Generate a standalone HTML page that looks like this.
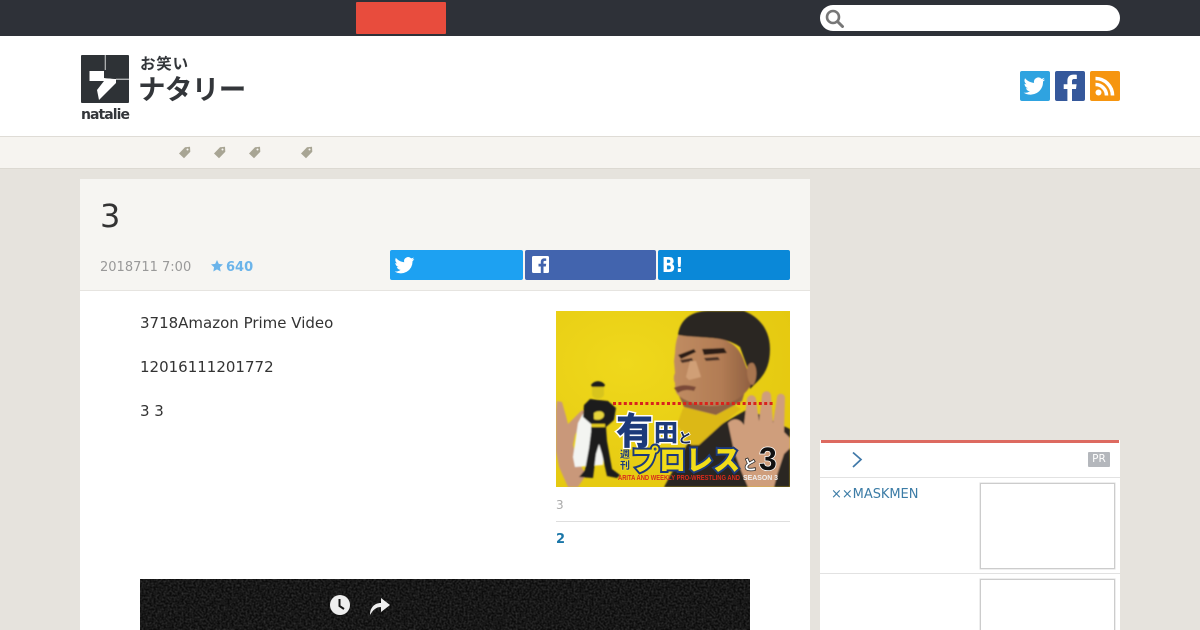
<!DOCTYPE html>
<html lang="ja"><head><meta charset="utf-8"><title>3</title>
<style>
html,body{margin:0;padding:0;width:1200px;height:630px;overflow:hidden;background:#e6e3dd;font-family:"DejaVu Sans","Noto Sans CJK JP",sans-serif;color:#333}
#w{position:relative;width:1200px;height:630px;overflow:hidden}
.a{position:absolute}
svg{display:block}
</style></head><body><div id="w">
<div class="a" style="left:0;top:0;width:1200px;height:36px;background:#2e3138"></div>
<div class="a" style="left:356px;top:2px;width:90px;height:32px;background:#e84c3d;border-radius:1px"></div>
<div class="a" style="left:820px;top:5px;width:300px;height:26px;background:#fff;border-radius:13px"></div>
<svg class="a" style="left:824px;top:8px" width="22" height="20" viewBox="0 0 22 20"><circle cx="9" cy="9" r="6" fill="none" stroke="#777" stroke-width="2.6"/><path d="M13.5 13.5L18.5 18.5" stroke="#777" stroke-width="3" stroke-linecap="round"/></svg>

<div class="a" style="left:0;top:36px;width:1200px;height:100px;background:#fff"></div>
<svg class="a" style="left:81px;top:55px" width="48" height="48" viewBox="0 0 48 48"><rect width="48" height="48" rx="1" fill="#2e3236"/><path d="M23.800 0h.8v15h-.8zM35 23.800h13v.8H35z" fill="#fff"/><path d="M8.500 16H23v7l12 1v4L18 45l-2-10 7-9H8.500z" fill="#fff"/><path d="M23 15.500l5-1.500 6 3 1 7-12-1z" fill="#2e3236"/></svg>
<div class="a" style="left:81px;top:107px;font:bold 14px/17px 'DejaVu Sans',sans-serif;color:#33363a;letter-spacing:-.95px">natalie</div>
<div class="a" style="left:140px;top:54px;font:700 15.5px/19px 'Noto Sans CJK JP',sans-serif;color:#33363a;letter-spacing:.8px;white-space:nowrap">お笑い</div>
<div class="a" style="left:138px;top:68px;font:700 27.500px/38px 'Noto Sans CJK JP',sans-serif;color:#33363a;letter-spacing:-.6px;white-space:nowrap">ナタリー</div>

<svg class="a" style="left:1020px;top:71px" width="30" height="30" viewBox="0 0 30 30"><rect width="30" height="30" rx="2" fill="#2fa3e0"/><path d="M25 8.500c-.8.4-1.600.6-2.500.7.900-.5 1.600-1.400 1.900-2.400-.8.5-1.800.9-2.800 1.100a4.400 4.400 0 0 0-7.500 4C10.500 11.700 7.300 10 5.100 7.300c-1.200 2-.6 4.600 1.400 5.900-.7 0-1.400-.2-2-.5 0 2.100 1.500 4 3.500 4.400-.6.200-1.300.2-2 .1.600 1.800 2.200 3 4.100 3.100A9 9 0 0 1 3.600 21.600 12.500 12.500 0 0 0 23 10.500c.8-.5 1.500-1.200 2-2z" fill="#fff"/></svg>
<svg class="a" style="left:1055px;top:71px" width="30" height="30" viewBox="0 0 30 30"><rect width="30" height="30" rx="2" fill="#35589b"/><path d="M17 30V18h4l.6-4.800H17V10.300c0-1.400.4-2.300 2.400-2.300h2.400V3.800c-.4-.1-1.900-.2-3.500-.2-3.500 0-5.900 2.100-5.900 6v3.600H8.700V18h3.700v12z" fill="#fff"/></svg>
<svg class="a" style="left:1090px;top:71px" width="30" height="30" viewBox="0 0 30 30"><rect width="30" height="30" rx="2" fill="#f6950f"/><circle cx="8.500" cy="21.500" r="3" fill="#fff"/><path d="M5.500 13.500a11 11 0 0 1 11 11M5.500 7.500a17 17 0 0 1 17 17" fill="none" stroke="#fff" stroke-width="3.600"/></svg>

<div class="a" style="left:0;top:136px;width:1200px;height:31px;background:#f6f4f0;border-top:1px solid #dfdcd6;border-bottom:1px solid #dcd9d2"></div>
<svg class="a" style="left:178px;top:146px" width="140" height="14" viewBox="0 0 140 14"><defs><path id="t" fill-rule="evenodd" d="M1 7.500L7 1.200 12 .8l.3 5L6 12.300zM9.500 2.500a1 1 0 1 0 .01 0z" fill="#a8a594"/></defs><use href="#t"/><use href="#t" x="35"/><use href="#t" x="70"/><use href="#t" x="122"/></svg>

<div class="a" style="left:80px;top:179px;width:730px;height:451px;background:#fff"></div>
<div class="a" style="left:80px;top:179px;width:730px;height:111px;background:#f6f5f2;border-bottom:1px solid #e6e4e0"></div>
<div class="a" style="left:100px;top:197px;font-size:32px;line-height:38px;color:#333">3</div>
<div class="a" style="left:100px;top:259px;font-size:13px;line-height:17px;color:#999;white-space:nowrap">2018711 7:00</div>
<svg class="a" style="left:210px;top:259px" width="14" height="14" viewBox="0 0 14 14"><path d="M7 1l1.800 3.900 4.200.5-3.100 2.900.8 4.200L7 10.400l-3.700 2.100.8-4.200L1 5.400l4.200-.5z" fill="#6bb4ea"/></svg>
<div class="a" style="left:226px;top:259px;font:bold 13px/17px 'DejaVu Sans',sans-serif;color:#6bb4ea">640</div>

<div class="a" style="left:390px;top:250px;width:133px;height:30px;background:#1da1f2;border-radius:2px"></div>
<div class="a" style="left:525px;top:250px;width:131px;height:30px;background:#4264ae;border-radius:2px"></div>
<div class="a" style="left:658px;top:250px;width:132px;height:30px;background:#0a88d8;border-radius:2px"></div>
<svg class="a" style="left:394px;top:255px" width="21" height="20" viewBox="0 0 30 28"><path d="M29 5.500c-1 .5-2.200.8-3.300.9 1.200-.7 2.100-1.800 2.500-3.200-1.100.7-2.400 1.100-3.700 1.400A5.800 5.800 0 0 0 14.600 10C9.800 9.700 5.600 7.400 2.700 3.900 1.100 6.600 1.900 10 4.500 11.700c-.9 0-1.800-.3-2.600-.7 0 2.800 2 5.200 4.700 5.800-.8.200-1.700.3-2.600.1.800 2.400 2.900 4 5.400 4A11.700 11.700 0 0 1 1 23.300 16.500 16.500 0 0 0 26.400 8.700c1-.8 1.900-1.900 2.600-3.200z" fill="#fff"/></svg>
<svg class="a" style="left:532px;top:256px" width="17" height="17" viewBox="0 0 17 17"><rect width="17" height="17" rx="1.500" fill="#fff"/><path d="M11.500 17v-6.500h2.300l.4-2.700h-2.700V6.200c0-.8.200-1.300 1.300-1.300h1.400V2.500c-.3 0-1.100-.1-2-.1-2 0-3.400 1.200-3.400 3.500v1.900H6.500v2.700h2.300V17z" fill="#4264ae"/></svg>
<div class="a" style="left:662px;top:253px;font:bold 20px/24px 'DejaVu Sans',sans-serif;color:#fff;transform:scaleX(.88);transform-origin:0 0">B!</div>

<div class="a" style="left:140px;top:314px;font-size:15px;line-height:18px;color:#333;white-space:nowrap">3718Amazon Prime Video</div>
<div class="a" style="left:140px;top:358px;font-size:15px;line-height:18px;color:#333;white-space:nowrap">12016111201772</div>
<div class="a" style="left:140px;top:402px;font-size:15px;line-height:18px;color:#333;white-space:nowrap">3 3</div>

<svg class="a" style="left:556px;top:311px" width="234" height="176" viewBox="0 0 234 176">
<defs><radialGradient id="y" cx=".3" cy=".3" r=".9"><stop offset="0" stop-color="#efd81c"/><stop offset="1" stop-color="#e3c60e"/></radialGradient>
<linearGradient id="sk" x1="0" y1="0" x2="1" y2="0"><stop offset="0" stop-color="#c08c62"/><stop offset=".6" stop-color="#b27c54"/><stop offset="1" stop-color="#8f5f40"/></linearGradient>
<filter id="b"><feGaussianBlur stdDeviation=".7"/></filter></defs>
<rect width="234" height="176" fill="url(#y)"/>
<g filter="url(#b)">
<path d="M108 176l24-44 60-34 42 20v58z" fill="#2b2824"/>
<path d="M127 97l8-2 40-3 10 6-20 16-22 20-8 0-14-20z" fill="#dcb818"/>
<path d="M120 78l8 18 32 8 26-14 6-20-62-8z" fill="#8f6242"/>
<path d="M122 24C124 8 136 0 152 0h36c16 6 26 20 26 38 0 14-4 24-12 32l-8 8-2-20-8-22c-8-6-18-8-30-9-14-1-24-1-32-3z" fill="#2a2622"/>
<path d="M122 24c10 2 28 2 42 4 12 2 20 10 24 22l8 22c-6 12-18 20-30 22-14 3-34-1-44-10-3-3-3-8-3-12-2-4-1-8 0-10l-1-12 1-8c0-6 1-12 3-18z" fill="url(#sk)"/>
<path d="M197 52c-4-1-6 3-6 8 0 6 2 14 6 14 4-4 5-18 0-22z" fill="#a87450"/>
<path d="M122 44l16-6 2 3-15 7zM146 38l22-1 3 5-23 2z" fill="#2a1f18"/>
<path d="M124 49l12-2 1 3-11 2zM148 47l14-1 2 3-14 1z" fill="#4a3026"/>
<path d="M134 50l6 0 5 16-12 3-3-3z" fill="#d09f76"/>
<path d="M118 77c8-4 14-3 22-1l-2 4c-6-2-12-1-16 2z" fill="#7a4a38"/>
<path d="M172 112c6-6 12-4 16 2l3-26c1-5 8-5 9 0l3 22 3-26c1-5 8-5 9 0l2 28 4-26c1-5 8-4 8 1l-1 34 6 6v10l-6 6-6 18-4 15h-26l-6-14-8-22z" fill="#cf9e7c"/>
<path d="M1 90l5 1 4 14 2 8 14-14 5 3-12 22-2 10 4 14 9 16-8 12H12L3 156 0 140V100z" fill="#c9987a"/>
<path d="M30 97L22 112l-5 34 2 10 28-2 3-52z" fill="#f3f4f1"/>
<path d="M34 88l-6 6-1 12 8 7 0 8-2 16-4 22-6 7 14 1 3-24 3-10 3 10 5 22 10 2 3-3-8-6-5-28-1-14 8-7 2-12-8-7z" fill="#1a1a1c"/>
<path d="M36 74c2-3 10-3 12 0l0 10c-2 5-10 5-12 0z" fill="#d8c41c"/>
<path d="M35 74c3-5 11-5 14 0l-1 2H36z" fill="#1a1a1c"/>
<path d="M38 102c4-3 10-2 10 2s-6 6-10 4z" fill="#e6d43a"/>
<rect x="35" y="113" width="14" height="3" fill="#e4cb1a"/>
</g>
<path d="M57 92.500H218" stroke="#d8231c" stroke-width="3" stroke-dasharray="3 2.400"/>
<text x="60" y="133" font-family="'Noto Sans CJK JP',sans-serif" font-weight="900" font-size="37" fill="#1d3a7a" stroke="#fff" stroke-width="3" paint-order="stroke">有</text>
<text x="98" y="130" font-family="'Noto Sans CJK JP',sans-serif" font-weight="900" font-size="24" fill="#1d3a7a" stroke="#fff" stroke-width="3" paint-order="stroke">田</text>
<text x="122" y="132" font-family="'Noto Sans CJK JP',sans-serif" font-weight="700" font-size="14" fill="#1d2b55" stroke="#fff" stroke-width="1.500" paint-order="stroke">と</text>
<text x="64" y="147" font-family="'Noto Sans CJK JP',sans-serif" font-weight="700" font-size="10" fill="#1d3a7a" stroke="#f3e33a" stroke-width="1" paint-order="stroke">週</text>
<text x="64" y="158" font-family="'Noto Sans CJK JP',sans-serif" font-weight="700" font-size="10" fill="#1d3a7a" stroke="#f3e33a" stroke-width="1" paint-order="stroke">刊</text>
<text x="76" y="159" font-family="'Noto Sans CJK JP',sans-serif" font-weight="900" font-size="28" fill="#f2dd18" stroke="#1d3a7a" stroke-width="4" paint-order="stroke" textLength="108" lengthAdjust="spacingAndGlyphs">プロレス</text>
<text x="187" y="159" font-family="'Noto Sans CJK JP',sans-serif" font-weight="700" font-size="14" fill="#fff" stroke="#222" stroke-width="1.500" paint-order="stroke">と</text>
<text x="203" y="159" font-family="'Liberation Sans',sans-serif" font-weight="700" font-size="32" fill="#111" stroke="#fff" stroke-width="1.500" paint-order="stroke">3</text>
<text x="62" y="169" font-family="'Liberation Sans',sans-serif" font-weight="700" font-size="7" fill="#d92a1c" textLength="122" lengthAdjust="spacingAndGlyphs">ARITA AND WEEKLY PRO-WRESTLING AND</text>
<text x="187" y="169" font-family="'Liberation Sans',sans-serif" font-weight="700" font-size="7" fill="#eee" textLength="35" lengthAdjust="spacingAndGlyphs">SEASON 3</text>
</svg>
<div class="a" style="left:556px;top:498px;font-size:12px;line-height:15px;color:#aaa">3</div>
<div class="a" style="left:556px;top:521px;width:234px;height:1px;background:#dedede"></div>
<div class="a" style="left:556px;top:532px;font:bold 13px/16px 'DejaVu Sans',sans-serif;color:#1a76a8">2</div>

<svg class="a" style="left:140px;top:579px" width="610" height="51"><filter id="n"><feTurbulence type="fractalNoise" baseFrequency=".5" numOctaves="2" seed="3"/><feColorMatrix values="0 0 0 0 .16 0 0 0 0 .16 0 0 0 0 .16 .7 0 0 0 -.22"/></filter><rect width="610" height="51" fill="#0b0b0b"/><rect width="610" height="51" filter="url(#n)"/></svg>
<svg class="a" style="left:329px;top:594px" width="62" height="24" viewBox="0 0 62 24"><circle cx="11" cy="11" r="10" fill="#eee"/><path d="M10.500 5v7l4.500 3" fill="none" stroke="#141414" stroke-width="2"/><path d="M41 21c0-7 4-12 11-12V4l9 7-9 7v-5c-5 0-8 3-11 8z" fill="#eee"/></svg>

<div class="a" style="left:820px;top:440px;width:300px;height:190px;background:#fff"></div>
<div class="a" style="left:821px;top:440px;width:298px;height:3px;background:#dd6a60"></div>
<svg class="a" style="left:851px;top:451px" width="12" height="18" viewBox="0 0 12 18"><path d="M2 1.500L10 8.500 2 16" fill="none" stroke="#3f78a8" stroke-width="1.700"/></svg>
<div class="a" style="left:1088px;top:452px;width:22px;height:15px;background:#b4b7bc;border-radius:1px;color:#fff;font-size:10.500px;line-height:15px;text-align:center">PR</div>
<div class="a" style="left:820px;top:477px;width:300px;height:1px;background:#e2e2e2"></div>
<div class="a" style="left:831px;top:486px;font-size:13px;line-height:17px;color:#3c7ca6;white-space:nowrap;letter-spacing:-.05px">××MASKMEN</div>
<div class="a" style="left:980px;top:483px;width:133px;height:84px;background:#fff;border:1px solid #ccc;box-shadow:0 0 0 .5px #ddd"></div>
<div class="a" style="left:820px;top:573px;width:300px;height:1px;background:#e2e2e2"></div>
<div class="a" style="left:980px;top:579px;width:133px;height:60px;background:#fff;border:1px solid #ccc;box-shadow:0 0 0 .5px #ddd"></div>
</div></body></html>
